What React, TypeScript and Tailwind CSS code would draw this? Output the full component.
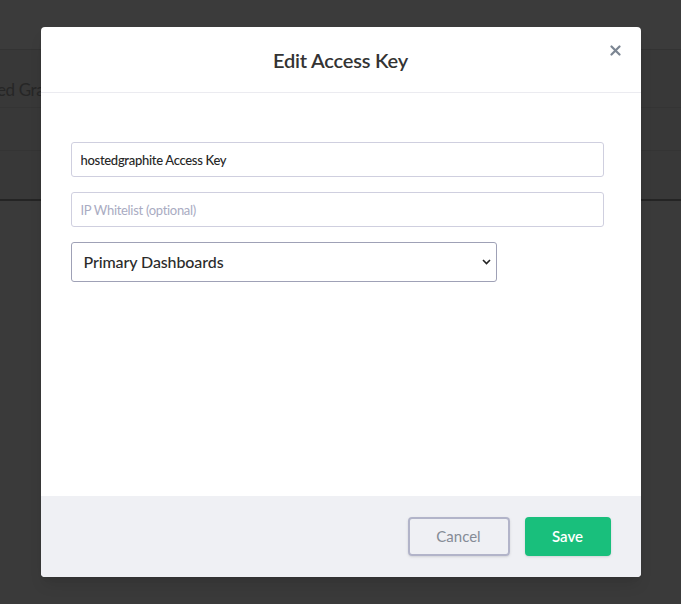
import React, { useState } from 'react';

const font = { fontFamily: 'Lato, "Source Sans Pro", "Noto Sans", sans-serif' };

const EditAccessKey: React.FC = () => {
  const [name, setName] = useState('hostedgraphite Access Key');
  const [whitelist, setWhitelist] = useState('');
  const [dashboard, setDashboard] = useState('primary');

  return (
    <div className="relative h-[604px] w-full overflow-hidden bg-[#3a3a3a]" style={font}>
      {/* page behind the overlay */}
      <div className="h-[50px] border-b border-[#333333] bg-[#3b3b3b]" />
      <div className="h-[58px] border-b border-[#343434] bg-[#383838] pt-[31px]">
        <span className="ml-[-3px] block text-[17px] leading-none tracking-[-0.4px] text-[#262626]">ed Graphite</span>
      </div>
      <div className="h-[43px] border-b border-[#343434] bg-[#383838]" />
      <div className="h-[50px] border-b-2 border-[#242424] bg-[#383838]" />

      {/* modal */}
      <div className="absolute inset-0 flex justify-center">
        <div className="mt-[27px] flex h-[550px] w-[600px] flex-col overflow-hidden rounded-[4px] bg-white shadow-lg">
          <div className="relative flex h-[66px] shrink-0 items-center justify-center border-b border-[#ebebf0]">
            <h2 className="mt-[1px] text-[20px] font-semibold tracking-[-0.2px] text-[#333333]">Edit Access Key</h2>
            <button className="absolute right-[20px] top-[18px] text-[#7b8592]" aria-label="Close">
              <svg width="11" height="11" viewBox="0 0 11 11">
                <path d="M1.5 1.5 L9.5 9.5 M9.5 1.5 L1.5 9.5" stroke="currentColor" strokeWidth="2.2" strokeLinecap="round" />
              </svg>
            </button>
          </div>

          <div className="flex flex-1 flex-col gap-[15px] pl-[30px] pt-[49px]">
            <input
              value={name}
              onChange={e => setName(e.target.value)}
              className="h-[35px] w-[533px] rounded-[3px] border border-[#cfcfdf] px-[9px] text-[13px] font-medium tracking-[-0.3px] text-[#262626] outline-none"
            />
            <input
              value={whitelist}
              onChange={e => setWhitelist(e.target.value)}
              placeholder="IP Whitelist (optional)"
              className="h-[35px] w-[533px] rounded-[3px] border border-[#cfcfdf] px-[9px] text-[13px] tracking-[-0.3px] text-[#2e2e2e] outline-none placeholder:text-[#a9abc2]"
            />
            <div className="relative w-[426px]">
              <select
                value={dashboard}
                onChange={e => setDashboard(e.target.value)}
                className="h-[40px] w-full appearance-none rounded-[3px] border border-[#9fa1b6] bg-white pl-[12px] text-[16px] font-medium tracking-[-0.1px] text-[#2b2b2b] outline-none"
                style={font}
              >
                <option value="primary">Primary Dashboards</option>
              </select>
              <svg className="pointer-events-none absolute right-[6px] top-[17px]" width="9" height="6" viewBox="0 0 9 6">
                <path d="M1 1 L4.5 4.5 L8 1" fill="none" stroke="#222" strokeWidth="1.6" />
              </svg>
            </div>
          </div>

          <div className="flex h-[81px] shrink-0 items-center justify-end gap-[15px] bg-[#eff0f4] pr-[30px]">
            <button className="h-[39px] w-[102px] rounded-[4px] border-2 border-[#b2b4c9] text-[15px] text-[#858b96] shadow-sm">
              Cancel
            </button>
            <button className="h-[39px] w-[86px] rounded-[4px] bg-[#19bf7c] text-[15px] font-semibold text-white shadow-sm">
              Save
            </button>
          </div>
        </div>
      </div>
    </div>
  );
};

export default function App() {
  return <EditAccessKey />;
}
